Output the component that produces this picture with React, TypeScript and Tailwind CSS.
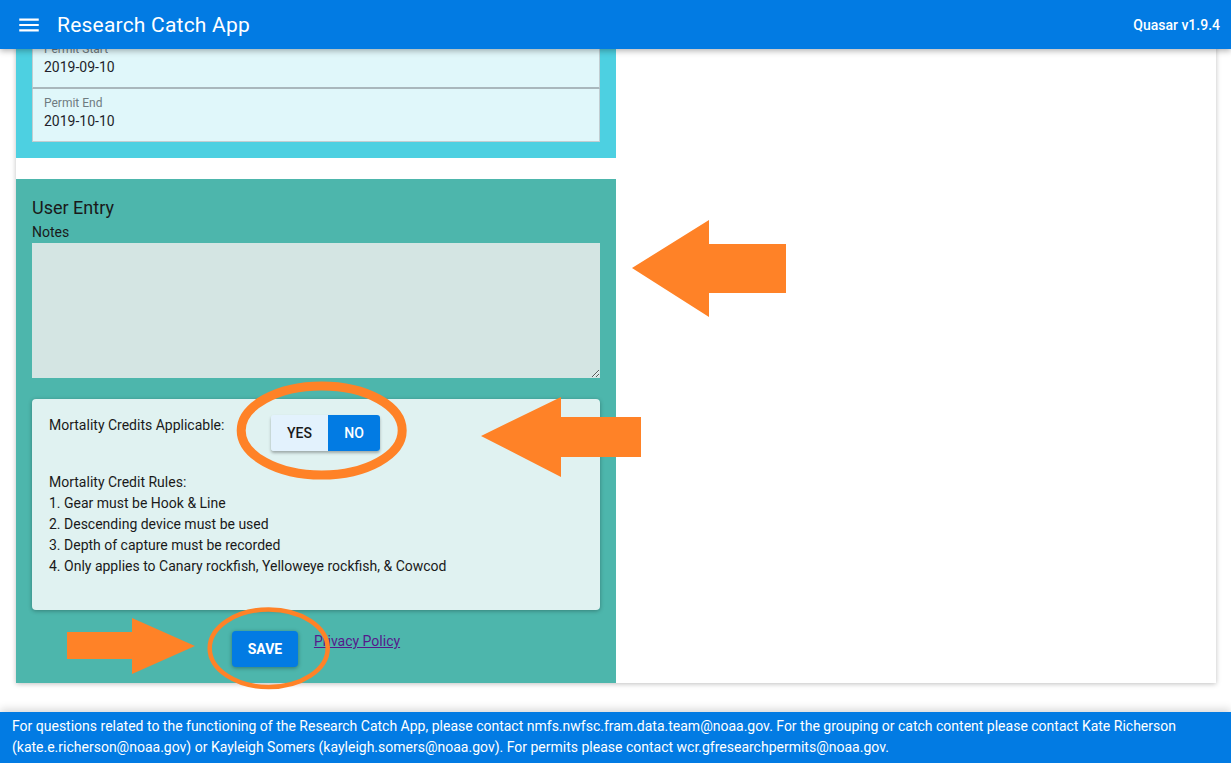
import React from "react";

const rules = [
  "1. Gear must be Hook & Line",
  "2. Descending device must be used",
  "3. Depth of capture must be recorded",
  "4. Only applies to Canary rockfish, Yelloweye rockfish, & Cowcod",
];

function Field({ label, value, last = false }: { label: string; value: string; last?: boolean }) {
  return (
    <div
      className={
        last
          ? "bg-[#e0f7fa] border-x border-b border-[#c2cdd1] px-[11px] pt-[6px] pb-[10px]"
          : "bg-[#e0f7fa] border-x border-t border-b-2 border-x-[#c2cdd1] border-t-[#c2cdd1] border-b-[#a9b7bc] px-[11px] pt-[6px] pb-[10px]"
      }
    >
      <div className="text-xs leading-4 text-[#6f7b80]">{label}</div>
      <div className="text-sm leading-5 text-[#1f1f2b]">{value}</div>
    </div>
  );
}

function Annotations() {
  return (
    <svg className="pointer-events-none absolute inset-0" width="1231" height="763">
      <g fill="#ff8227">
        <polygon points="632,268 709,220 709,244 786,244 786,293 709,293 709,317" />
        <polygon points="481,436 561,397 561,417 641,417 641,457 561,457 561,477" />
        <polygon points="67,632 132,632 132,618 195,646 132,674 132,659 67,659" />
      </g>
      <ellipse cx="321.7" cy="430.5" rx="80.5" ry="44.5" fill="none" stroke="#ff8227" strokeWidth="9" />
      <ellipse cx="268.7" cy="648.3" rx="59" ry="38.8" fill="none" stroke="#ff8227" strokeWidth="4.5" />
    </svg>
  );
}

export default function App() {
  return (
    <div className="relative h-[763px] overflow-hidden bg-white font-['Roboto','Liberation_Sans',sans-serif]">
      {/* Header */}
      <header className="absolute top-0 left-0 right-0 z-10 flex h-[49px] items-center bg-[#027be3] pl-4 pr-[11px] text-white shadow-[0_2px_6px_rgba(0,0,0,0.3)]">
        <svg width="26" height="26" viewBox="0 0 24 24" fill="currentColor">
          <path d="M3 18h18v-2H3v2zm0-5h18v-2H3v2zm0-7v2h18V6H3z" />
        </svg>
        <div className="ml-[15px] text-[21px] leading-7 tracking-[0.01em]">Research Catch App</div>
        <div className="ml-auto text-sm font-medium">Quasar v1.9.4</div>
      </header>

      <div className="flex h-full flex-col">
        <main className="flex-1">
          <div className="mx-4 flex w-[1200px] bg-white shadow-[0_1px_5px_rgba(0,0,0,0.25)]">
            <div className="w-[600px]">
              {/* Permit section */}
              <div className="bg-[#4dd0e1] px-4 pt-[34px] pb-4">
                <Field label="Permit Start" value="2019-09-10" />
                <Field label="Permit End" value="2019-10-10" last />
              </div>

              {/* User entry */}
              <div className="mt-[21px] bg-[#4db6ac] px-4 pt-[15px] pb-4 text-[#1a1a1a]">
                <div className="text-[18px] leading-7">User Entry</div>
                <div className="text-sm leading-5">Notes</div>
                <textarea className="mt-px block h-[135px] w-full border-0 bg-[#d4e5e3] outline-none" />

                <div className="mt-[21px] rounded bg-[#e0f2f1] pt-4 pl-[17px] pr-4 pb-[33px] text-sm shadow-[0_1px_4px_rgba(0,0,0,0.3)]">
                  <div className="flex items-start">
                    <span className="w-[222px] leading-5">Mortality Credits Applicable:</span>
                    <div className="flex h-9 overflow-hidden rounded-[3px] font-medium shadow-[0_2px_3px_rgba(0,0,0,0.3)]">
                      <button className="w-[57px] bg-[#e3f2fd] text-[#1a1a1a]">YES</button>
                      <button className="w-[52px] bg-[#027be3] text-white">NO</button>
                    </div>
                  </div>
                  <div className="mt-[21px] leading-[21px]">
                    <div>Mortality Credit Rules:</div>
                    {rules.map((r) => (
                      <div key={r}>{r}</div>
                    ))}
                  </div>
                </div>

                <div className="mt-[21px] flex items-start justify-center gap-4">
                  <button className="h-9 w-[66px] rounded bg-[#027be3] text-sm font-bold text-white shadow-[0_1px_4px_rgba(0,0,0,0.35)]">
                    SAVE
                  </button>
                  <a href="#" className="text-sm leading-5 text-[#551a8b] underline">
                    Privacy Policy
                  </a>
                </div>
              </div>
            </div>
            <div className="flex-1" />
          </div>
        </main>

        {/* Footer */}
        <footer className="h-[51px] bg-[#027be3] px-3 pt-1 text-sm leading-[21px] text-white shadow-[0_-3px_8px_rgba(0,0,0,0.15)]">
          For questions related to the functioning of the Research Catch App, please contact nmfs.nwfsc.fram.data.team@noaa.gov. For the grouping or catch content please contact Kate Richerson (kate.e.richerson@noaa.gov) or Kayleigh Somers (kayleigh.somers@noaa.gov). For permits please contact wcr.gfresearchpermits@noaa.gov.
        </footer>
      </div>

      <Annotations />
    </div>
  );
}
